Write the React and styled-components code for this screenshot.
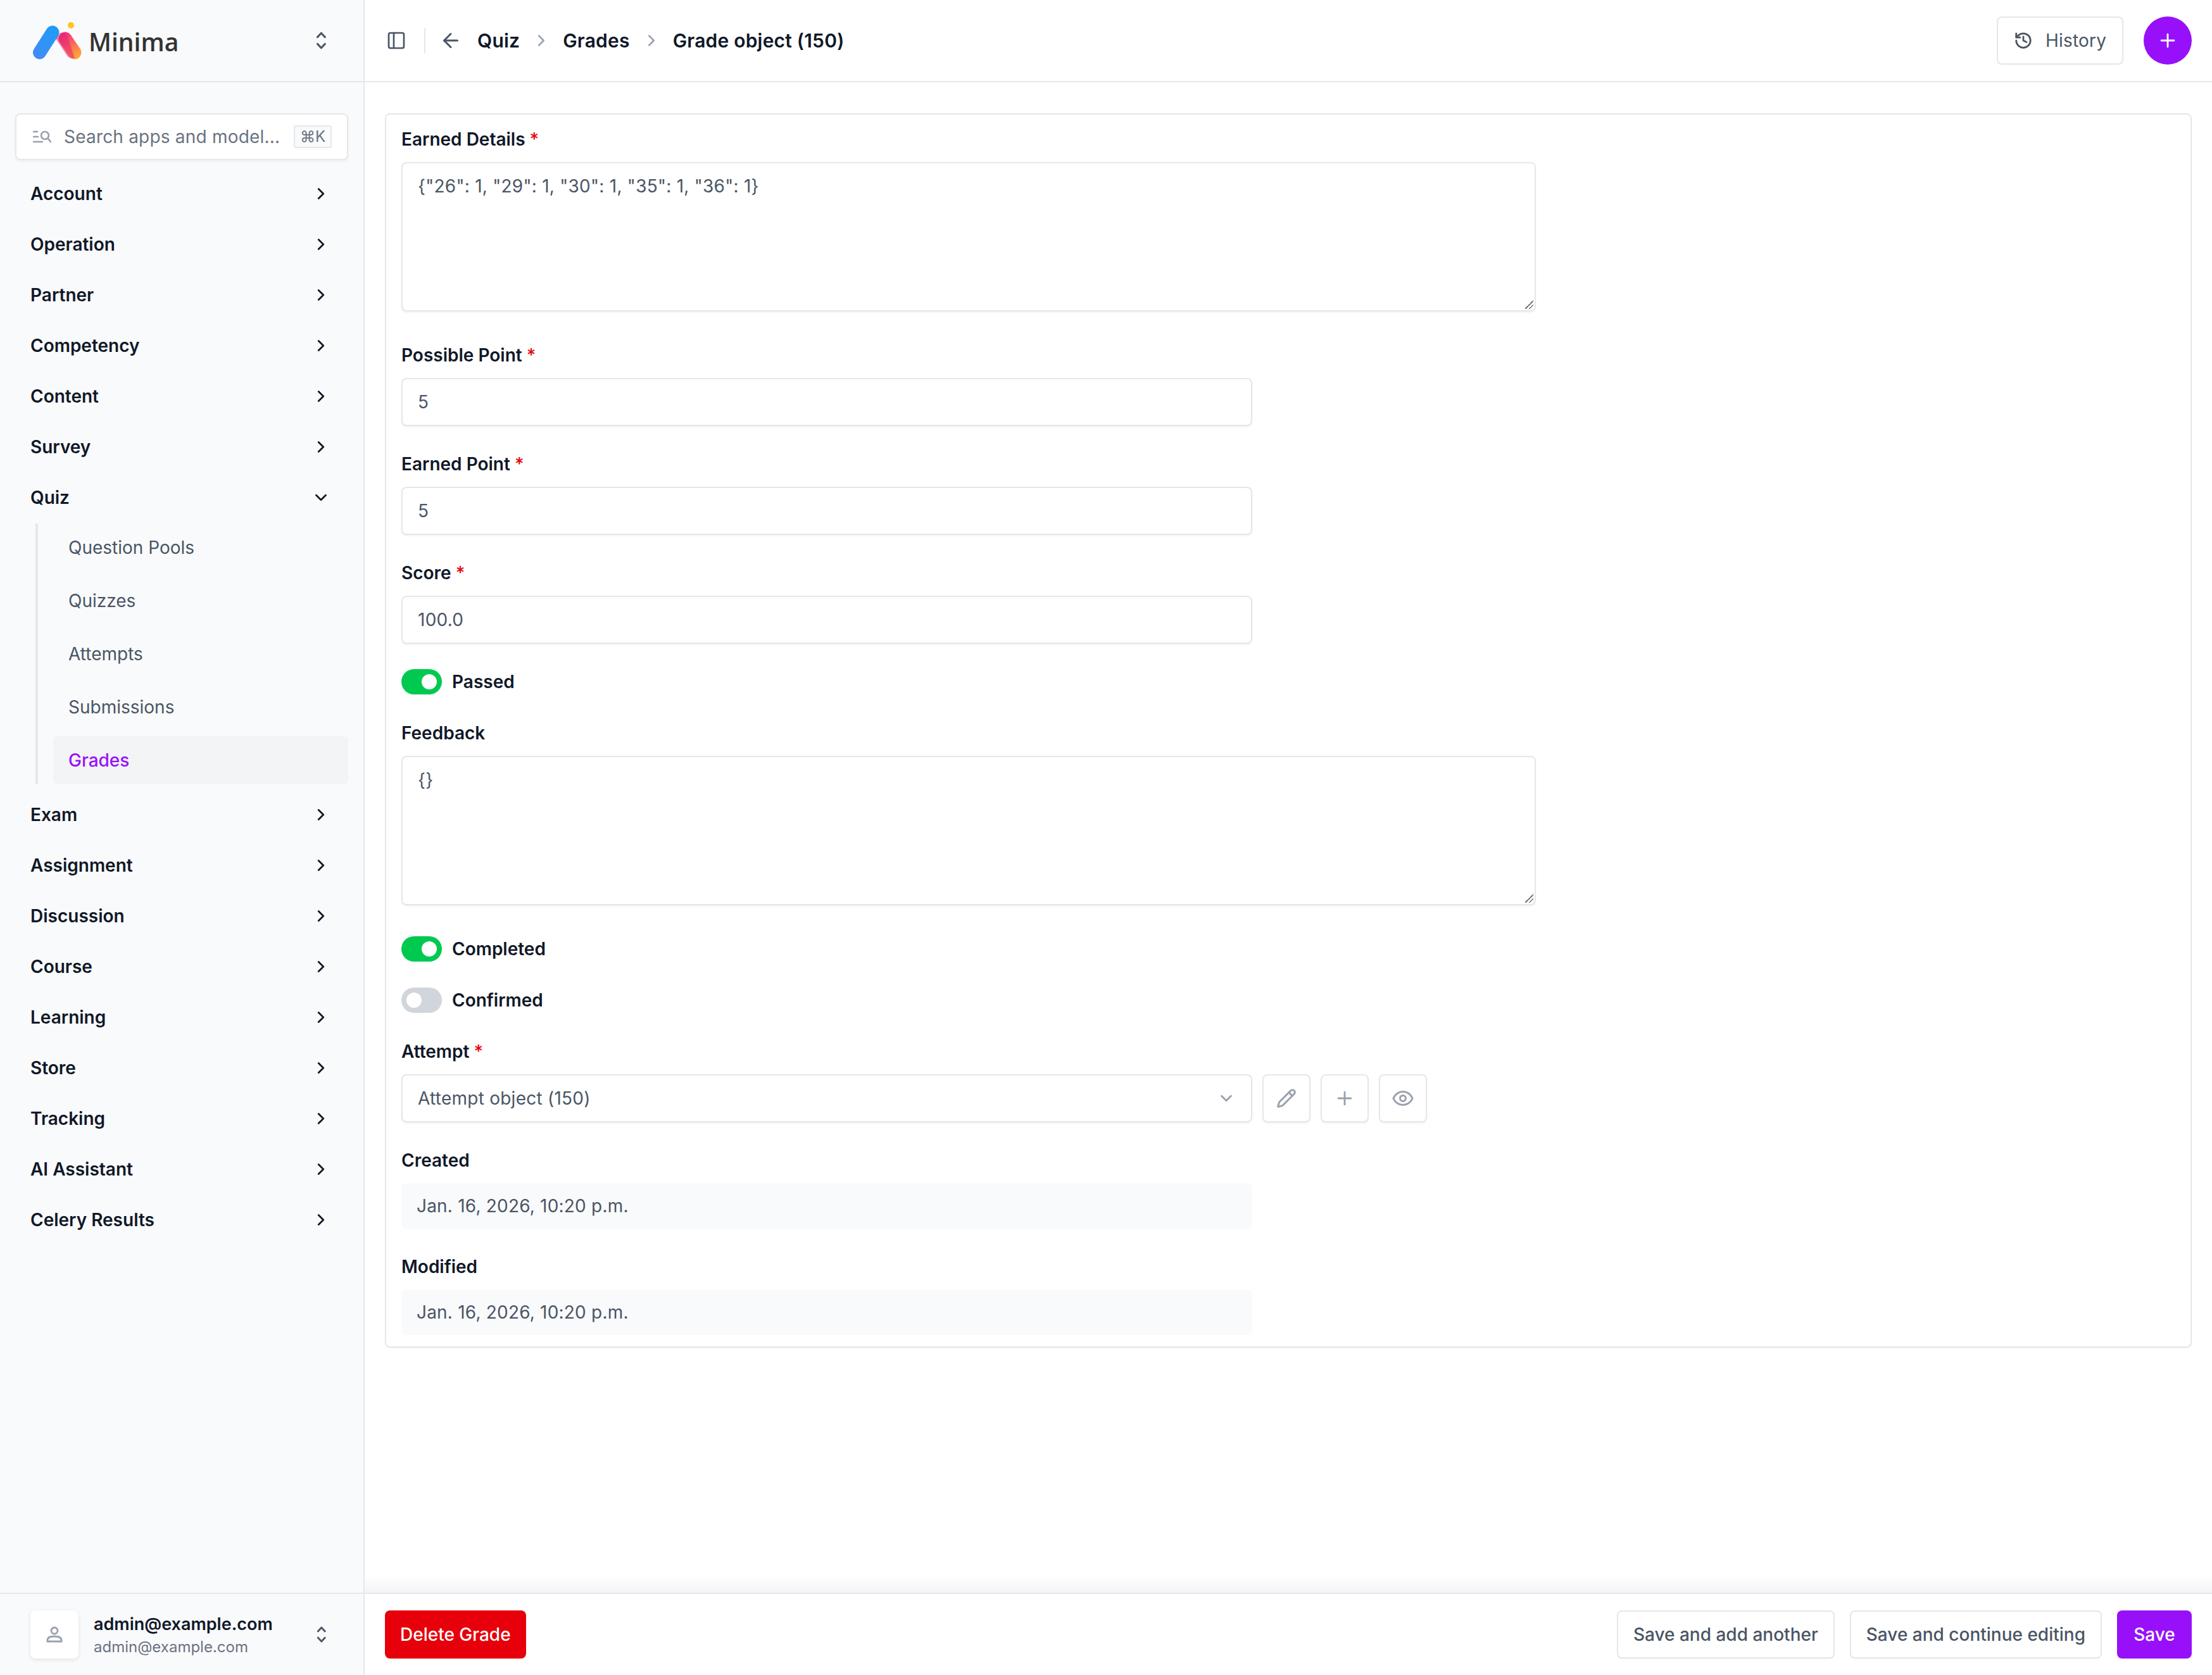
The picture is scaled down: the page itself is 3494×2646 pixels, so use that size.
import React from "react";
import styled, { createGlobalStyle } from "styled-components";
import { ArrowLeft, ChevronDown, ChevronRight, History, PanelLeft, Plus, Eye, Pencil } from "lucide-react";

const GlobalStyle = createGlobalStyle`
  * { box-sizing: border-box; }
  html, body { margin: 0; padding: 0; background: #fff; }
  body {
    font-family: Inter, "Liberation Sans", sans-serif;
    font-size: 28px;
    line-height: 40px;
    color: #101828;
  }
`;

const topMenu = ["Account", "Operation", "Partner", "Competency", "Content", "Survey"];
const quizItems = ["Question Pools", "Quizzes", "Attempts", "Submissions", "Grades"];
const bottomMenu = ["Exam", "Assignment", "Discussion", "Course", "Learning", "Store", "Tracking", "AI Assistant", "Celery Results"];

const Logo = () => (
  <svg width="80" height="62" viewBox="50 33 80 62" fill="none">
    <defs>
      <linearGradient id="blue" x1="60" y1="85" x2="90" y2="50" gradientUnits="userSpaceOnUse">
        <stop offset="0" stopColor="#3f8cf6" />
        <stop offset="1" stopColor="#1f9bf5" />
      </linearGradient>
      <linearGradient id="warm" x1="100" y1="55" x2="122" y2="88" gradientUnits="userSpaceOnUse">
        <stop offset="0" stopColor="#f9307f" />
        <stop offset="1" stopColor="#ffa23a" />
      </linearGradient>
    </defs>
    <line x1="62.5" y1="83" x2="83" y2="51" stroke="url(#blue)" strokeWidth="21" strokeLinecap="round" />
    <line x1="103" y1="61" x2="118" y2="83" stroke="url(#warm)" strokeWidth="21" strokeLinecap="round" />
    <path d="M88 61 L95 52 C100 51 103 52 106 55 L118 92 C113 93 109 92 106 88 Z" fill="#e0276f" opacity="0.55" />
    <circle cx="112" cy="40" r="5" fill="#ffc61c" />
  </svg>
);

const UpDown = ({ size = 28 }) => (
  <svg width={size * 0.6} height={size} viewBox="0 0 15 26" fill="none" stroke="#4a5565" strokeWidth="2.8" strokeLinecap="round" strokeLinejoin="round">
    <path d="M2 8l5.5-6L13 8" />
    <path d="M2 18l5.5 6L13 18" />
  </svg>
);

const SearchGlyph = () => (
  <svg width="30" height="20" viewBox="0 0 30 20" fill="none" stroke="#99a1af" strokeWidth="2.6" strokeLinecap="round">
    <path d="M1 2h6M1 10h7M1 18h14" />
    <circle cx="19" cy="8" r="6" />
    <path d="M24 13l4 5" />
  </svg>
);

const UserGlyph = () => (
  <svg width="26" height="26" viewBox="0 0 26 26" fill="none" stroke="#99a1af" strokeWidth="2.8">
    <circle cx="13" cy="7" r="5" />
    <path d="M2 24v-2c0-4 4-6 11-6s11 2 11 6v2z" />
  </svg>
);

const Nav = ({ label, open }) => (
  <NavRow>
    <span>{label}</span>
    <NavChevron>{open ? <ChevronDown size={30} strokeWidth={2.2} /> : <ChevronRight size={30} strokeWidth={2.2} />}</NavChevron>
  </NavRow>
);

const Req = () => <Star>*</Star>;

export default function App() {
  return (
    <Shell>
      <GlobalStyle />
      <Sidebar>
        <Brand>
          <Logo />
          <BrandName>Minima</BrandName>
          <BrandSwitch><UpDown /></BrandSwitch>
        </Brand>
        <Menu>
          <SearchBox>
            <SearchGlyph />
            <SearchText>Search apps and model...</SearchText>
            <Kbd>⌘K</Kbd>
          </SearchBox>
          <NavList>
            {topMenu.map((m) => <Nav key={m} label={m} />)}
            <Nav label="Quiz" open />
            <SubList>
              {quizItems.map((q) => <SubItem key={q} $active={q === "Grades"}>{q}</SubItem>)}
            </SubList>
            {bottomMenu.map((m) => <Nav key={m} label={m} />)}
          </NavList>
        </Menu>
        <UserBar>
          <Avatar><UserGlyph /></Avatar>
          <UserText>
            <UserName>admin@example.com</UserName>
            <UserMail>admin@example.com</UserMail>
          </UserText>
          <BrandSwitch><UpDown size={26} /></BrandSwitch>
        </UserBar>
      </Sidebar>

      <Main>
        <TopBar>
          <PanelButton><PanelLeft size={32} strokeWidth={2} /></PanelButton>
          <Divider />
          <BackArrow><ArrowLeft size={36} strokeWidth={2} /></BackArrow>
          <Crumb>Quiz</Crumb>
          <CrumbSep><ChevronRight size={30} strokeWidth={2} /></CrumbSep>
          <Crumb>Grades</Crumb>
          <CrumbSep><ChevronRight size={30} strokeWidth={2} /></CrumbSep>
          <Crumb>Grade object (150)</Crumb>
          <TopActions>
            <HistoryButton><History size={30} strokeWidth={2.2} />History</HistoryButton>
            <RoundAdd><Plus size={34} strokeWidth={2} /></RoundAdd>
          </TopActions>
        </TopBar>

        <Content>
          <Card>
            <Field $after={49}>
              <Label>Earned Details <Req /></Label>
              <TextBox>{'{"26": 1, "29": 1, "30": 1, "35": 1, "36": 1}'}<Grip /></TextBox>
            </Field>
            <Field>
              <Label>Possible Point <Req /></Label>
              <Input>5</Input>
            </Field>
            <Field>
              <Label>Earned Point <Req /></Label>
              <Input>5</Input>
            </Field>
            <Field>
              <Label>Score <Req /></Label>
              <Input>100.0</Input>
            </Field>
            <ToggleRow><Toggle $on><Knob $on /></Toggle>Passed</ToggleRow>
            <Field $after={49}>
              <Label>Feedback</Label>
              <TextBox>{"{}"}<Grip /></TextBox>
            </Field>
            <ToggleRow><Toggle $on><Knob $on /></Toggle>Completed</ToggleRow>
            <ToggleRow><Toggle><Knob /></Toggle>Confirmed</ToggleRow>
            <Field>
              <Label>Attempt <Req /></Label>
              <SelectRow>
                <Select>
                  Attempt object (150)
                  <SelectChevron><ChevronDown size={30} strokeWidth={2.2} /></SelectChevron>
                </Select>
                <IconButton><Pencil size={32} strokeWidth={2.2} /></IconButton>
                <IconButton><Plus size={34} strokeWidth={2} /></IconButton>
                <IconButton><Eye size={36} strokeWidth={2} /></IconButton>
              </SelectRow>
            </Field>
            <Field>
              <Label>Created</Label>
              <ReadOnly>Jan. 16, 2026, 10:20 p.m.</ReadOnly>
            </Field>
            <Field $after={18}>
              <Label>Modified</Label>
              <ReadOnly>Jan. 16, 2026, 10:20 p.m.</ReadOnly>
            </Field>
          </Card>
        </Content>

        <ActionBar>
          <DangerButton>Delete Grade</DangerButton>
          <ActionSpacer />
          <GhostButton>Save and add another</GhostButton>
          <GhostButton>Save and continue editing</GhostButton>
          <PrimaryButton>Save</PrimaryButton>
        </ActionBar>
      </Main>
    </Shell>
  );
}

const Shell = styled.div`
  display: flex;
  height: 100vh;
  overflow: hidden;
`;

const Sidebar = styled.aside`
  width: 576px;
  flex: none;
  display: flex;
  flex-direction: column;
  background: #f9fafb;
  border-right: 2px solid #e5e7eb;
`;

const Brand = styled.div`
  height: 130px;
  flex: none;
  display: flex;
  align-items: center;
  padding: 0 58px 0 50px;
  border-bottom: 2px solid #e5e7eb;
`;

const BrandName = styled.div`
  margin-left: 10px;
  margin-top: 4px;
  font-family: "Open Sans", Inter, sans-serif;
  font-size: 39px;
  font-weight: 600;
  color: #333;
`;

const BrandSwitch = styled.div`
  margin-left: auto;
  display: flex;
`;

const Menu = styled.div`
  flex: 1;
  padding: 49px 24px 0;
  min-height: 0;
`;

const SearchBox = styled.div`
  height: 74px;
  display: flex;
  align-items: center;
  padding: 0 24px 0 26px;
  background: #fff;
  border: 2px solid #e5e7eb;
  border-radius: 8px;
  box-shadow: 0 2px 4px rgba(0, 0, 0, 0.05);
`;

const SearchText = styled.span`
  margin-left: 19px;
  color: #6a7282;
  white-space: nowrap;
  letter-spacing: 0.2px;
`;

const Kbd = styled.span`
  margin-left: auto;
  width: 60px;
  height: 36px;
  display: flex;
  align-items: center;
  justify-content: center;
  font-size: 24px;
  color: #6a7282;
  background: #f9fafb;
  border: 2px solid #e5e7eb;
  border-radius: 4px;
`;

const NavList = styled.nav`
  margin-top: 13px;
`;

const NavRow = styled.div`
  height: 80px;
  display: flex;
  align-items: center;
  justify-content: space-between;
  padding: 0 24px;
  font-weight: 600;
  color: #101828;
`;

const NavChevron = styled.span`
  display: flex;
  color: #101828;
  margin-right: 4px;
`;

const SubList = styled.div`
  margin: 1px 0 8px 32px;
  padding-left: 24px;
  border-left: 4px solid #e5e7eb;
  display: flex;
  flex-direction: column;
  gap: 8px;
`;

const SubItem = styled.div`
  height: 76px;
  display: flex;
  align-items: center;
  padding: 0 24px;
  border-radius: 8px;
  color: ${(p) => (p.$active ? "#9810fa" : "#4a5565")};
  font-weight: ${(p) => (p.$active ? 500 : 400)};
  background: ${(p) => (p.$active ? "#f3f4f6" : "transparent")};
`;

const UserBar = styled.div`
  height: 130px;
  flex: none;
  display: flex;
  align-items: center;
  padding: 0 58px 0 48px;
  border-top: 2px solid #e5e7eb;
`;

const Avatar = styled.div`
  width: 76px;
  height: 76px;
  display: flex;
  align-items: center;
  justify-content: center;
  background: #fff;
  border-radius: 8px;
  box-shadow: 0 2px 6px rgba(0, 0, 0, 0.1);
`;

const UserText = styled.div`
  margin-left: 24px;
`;

const UserName = styled.div`
  font-size: 27px;
  font-weight: 600;
  line-height: 40px;
`;

const UserMail = styled.div`
  font-size: 24px;
  line-height: 32px;
  color: #6a7282;
`;

const Main = styled.main`
  flex: 1;
  min-width: 0;
  display: flex;
  flex-direction: column;
`;

const TopBar = styled.header`
  height: 130px;
  flex: none;
  display: flex;
  align-items: center;
  padding: 0 32px 0 34px;
  border-bottom: 2px solid #e5e7eb;
`;

const PanelButton = styled.span`
  display: flex;
  color: #4a5565;
`;

const Divider = styled.span`
  width: 2px;
  height: 40px;
  margin: 0 22px 0 28px;
  background: #e5e7eb;
`;

const BackArrow = styled.span`
  display: flex;
  color: #4a5565;
  margin-right: 24px;
`;

const Crumb = styled.span`
  font-size: 30px;
  font-weight: 600;
  letter-spacing: 0.2px;
  color: #101828;
`;

const CrumbSep = styled.span`
  display: flex;
  margin: 0 19px;
  color: #99a1af;
`;

const TopActions = styled.div`
  margin-left: auto;
  display: flex;
  align-items: center;
  gap: 32px;
`;

const HistoryButton = styled.button`
  height: 76px;
  width: 200px;
  display: flex;
  align-items: center;
  justify-content: center;
  gap: 20px;
  font: inherit;
  letter-spacing: 0.2px;
  color: #4a5565;
  background: #fff;
  border: 2px solid #e5e7eb;
  border-radius: 8px;
  box-shadow: 0 1px 2px rgba(0, 0, 0, 0.04);
`;

const RoundAdd = styled.button`
  width: 76px;
  height: 76px;
  padding: 0;
  display: flex;
  align-items: center;
  justify-content: center;
  color: #fff;
  background: #9810fa;
  border: none;
  border-radius: 50%;
`;

const Content = styled.div`
  flex: 1;
  min-height: 0;
  padding: 49px 32px 0;
  position: relative;
  &::after {
    content: "";
    position: absolute;
    left: 0;
    right: 0;
    bottom: 0;
    height: 28px;
    background: linear-gradient(to bottom, rgba(243, 244, 246, 0), #f3f4f6);
  }
`;

const Card = styled.section`
  height: 1950px;
  padding: 19px 24px 0;
  border: 2px solid #e5e7eb;
  border-radius: 8px;
  box-shadow: 0 1px 2px rgba(0, 0, 0, 0.04);
`;

const Field = styled.div`
  margin-bottom: ${(p) => (p.$after ? p.$after : 40)}px;
`;

const Label = styled.div`
  margin-bottom: 16px;
  font-weight: 600;
  color: #101828;
`;

const Star = styled.span`
  color: #e7000b;
  font-weight: 500;
`;

const boxBase = `
  background: #fff;
  border: 2px solid #e5e7eb;
  border-radius: 8px;
  box-shadow: 0 2px 3px rgba(0, 0, 0, 0.05);
  color: #4a5565;
  letter-spacing: 0.25px;
`;

const TextBox = styled.div`
  ${boxBase}
  position: relative;
  width: 1792px;
  height: 236px;
  padding: 16px 24px;
`;

const Grip = styled.span`
  position: absolute;
  right: 2px;
  bottom: 2px;
  width: 14px;
  height: 14px;
  background: linear-gradient(
    135deg,
    transparent 50%,
    #777 50%,
    #777 58%,
    transparent 58%,
    transparent 74%,
    #777 74%,
    #777 82%,
    transparent 82%
  );
`;

const Input = styled.div`
  ${boxBase}
  width: 1344px;
  height: 76px;
  display: flex;
  align-items: center;
  padding: 0 24px;
`;

const ToggleRow = styled.div`
  display: flex;
  align-items: center;
  gap: 16px;
  height: 40px;
  margin-bottom: 41px;
  font-weight: 600;
`;

const Toggle = styled.span`
  width: 64px;
  height: 40px;
  display: flex;
  align-items: center;
  padding: 0 8px;
  justify-content: ${(p) => (p.$on ? "flex-end" : "flex-start")};
  background: ${(p) => (p.$on ? "#00c950" : "#d1d5dc")};
  border-radius: 20px;
`;

const Knob = styled.span`
  width: 24px;
  height: 24px;
  background: #fff;
  border-radius: 50%;
`;

const SelectRow = styled.div`
  display: flex;
  gap: 16px;
`;

const Select = styled(Input)`
  justify-content: space-between;
  padding-right: 24px;
`;

const SelectChevron = styled.span`
  display: flex;
  color: #99a1af;
`;

const IconButton = styled.span`
  ${boxBase}
  width: 76px;
  height: 76px;
  display: flex;
  align-items: center;
  justify-content: center;
  color: #99a1af;
`;

const ReadOnly = styled.div`
  width: 1344px;
  height: 72px;
  display: flex;
  align-items: center;
  padding: 0 24px;
  background: #f9fafb;
  border-radius: 8px;
  color: #4a5565;
  letter-spacing: 0.2px;
`;

const ActionBar = styled.footer`
  height: 130px;
  flex: none;
  display: flex;
  align-items: center;
  gap: 24px;
  padding: 0 32px;
  border-top: 2px solid #e5e7eb;
`;

const ActionSpacer = styled.div`
  flex: 1;
`;

const baseButton = `
  height: 76px;
  padding: 0 24px;
  font: inherit;
  font-weight: 500;
  border-radius: 8px;
`;

const DangerButton = styled.button`
  ${baseButton}
  color: #fff;
  background: #e7000b;
  border: none;
`;

const GhostButton = styled.button`
  ${baseButton}
  color: #4a5565;
  background: #fff;
  border: 2px solid #e5e7eb;
  box-shadow: 0 1px 2px rgba(0, 0, 0, 0.04);
`;

const PrimaryButton = styled.button`
  ${baseButton}
  width: 118px;
  padding: 0;
  color: #fff;
  background: #9810fa;
  border: none;
`;
